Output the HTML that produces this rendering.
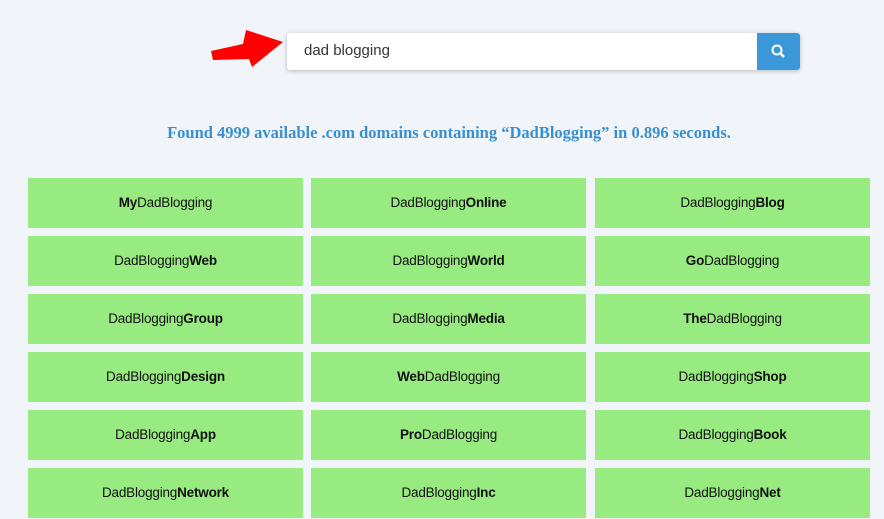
<!DOCTYPE html>
<html><head><style>
body{margin:0;width:884px;height:519px;background:#f1f5f9;overflow:hidden;font-family:"Liberation Sans",sans-serif;position:relative}
.search{position:absolute;left:287px;top:33px;width:513px;height:37px;background:#fff;border-radius:3px;box-shadow:0 1px 5px rgba(0,0,0,.25)}
.search span{position:absolute;left:17px;top:9px;font-size:15px;color:#333}
.btn{position:absolute;right:0;top:0;width:43px;height:37px;background:#3a98d8;border-radius:0 3px 3px 0}
.msg{position:absolute;top:123px;left:0;width:898px;text-align:center;font-family:"Liberation Serif",serif;font-weight:bold;font-size:16.5px;color:#3a8fcf}
.box{position:absolute;width:275px;height:50px;background:#98eb80;text-align:center;line-height:50px;font-size:13.5px;color:#111;letter-spacing:-0.2px}
</style></head><body>
<svg style="position:absolute;left:0;top:0" width="300" height="80"><polygon points="211,51 243,44 246,30 283,42 252,67 249,59 213,60" fill="#f00"/></svg>
<div class="search"><span>dad blogging</span><div class="btn"><svg width="43" height="37"><circle cx="20" cy="17" r="4.5" fill="none" stroke="#fff" stroke-width="2"/><line x1="23.5" y1="20.5" x2="27" y2="24" stroke="#fff" stroke-width="2.5"/></svg></div></div>
<div class="msg">Found 4999 available .com domains containing “DadBlogging” in 0.896 seconds.</div>
<div class="box" style="left:28px;top:178px"><b>My</b>DadBlogging</div>
<div class="box" style="left:311px;top:178px">DadBlogging<b>Online</b></div>
<div class="box" style="left:595px;top:178px">DadBlogging<b>Blog</b></div>
<div class="box" style="left:28px;top:236px">DadBlogging<b>Web</b></div>
<div class="box" style="left:311px;top:236px">DadBlogging<b>World</b></div>
<div class="box" style="left:595px;top:236px"><b>Go</b>DadBlogging</div>
<div class="box" style="left:28px;top:294px">DadBlogging<b>Group</b></div>
<div class="box" style="left:311px;top:294px">DadBlogging<b>Media</b></div>
<div class="box" style="left:595px;top:294px"><b>The</b>DadBlogging</div>
<div class="box" style="left:28px;top:352px">DadBlogging<b>Design</b></div>
<div class="box" style="left:311px;top:352px"><b>Web</b>DadBlogging</div>
<div class="box" style="left:595px;top:352px">DadBlogging<b>Shop</b></div>
<div class="box" style="left:28px;top:410px">DadBlogging<b>App</b></div>
<div class="box" style="left:311px;top:410px"><b>Pro</b>DadBlogging</div>
<div class="box" style="left:595px;top:410px">DadBlogging<b>Book</b></div>
<div class="box" style="left:28px;top:468px">DadBlogging<b>Network</b></div>
<div class="box" style="left:311px;top:468px">DadBlogging<b>Inc</b></div>
<div class="box" style="left:595px;top:468px">DadBlogging<b>Net</b></div>
</body></html>
